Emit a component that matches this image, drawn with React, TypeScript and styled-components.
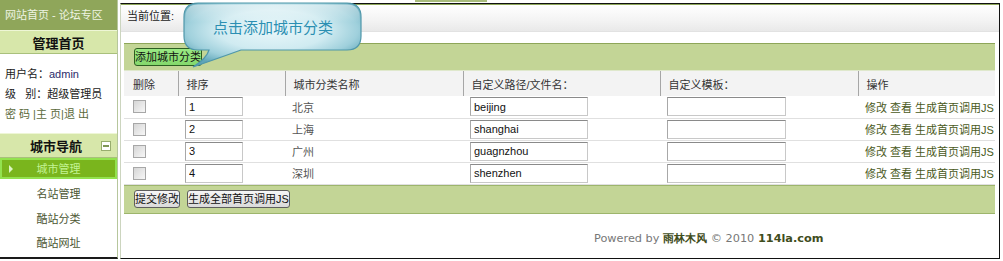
import React from 'react';
import styled, { createGlobalStyle } from 'styled-components';

// Global reset
const GlobalStyle = createGlobalStyle`
  *, *::before, *::after { box-sizing: border-box; }
  html, body { margin: 0; padding: 0; background: #fff; }
  body {
    font: 11px "Liberation Sans", "Noto Sans CJK SC", sans-serif;
    color: #222;
  }
`;

const Page = styled.div`
  display: flex;
  width: 1003px;
  height: 261px;
  overflow: hidden;
`;

// Sidebar
const Sidebar = styled.aside`
  width: 118px;
  height: 259px;
  border-right: 1px solid #b6c69c;
  border-bottom: 2px solid #1a1a1a;
  display: flex;
  flex-direction: column;
`;

const SideTitle = styled.div`
  height: 30px;
  line-height: 30px;
  padding-left: 5px;
  background: #8fa65a;
  color: #eef4e2;
  white-space: nowrap;
`;

const SideHead = styled.div<{ $withToggle?: boolean }>`
  display: flex;
  align-items: center;
  justify-content: ${p => (p.$withToggle ? 'flex-start' : 'center')};
  height: ${p => (p.$withToggle ? '25px' : '24px')};
  padding-left: ${p => (p.$withToggle ? '30px' : '0')};
  background: #d7e7aa;
  border-top: 1px solid #eef6d6;
  border-bottom: 1px solid #a9c07c;
  font-size: 13px;
  font-weight: bold;
  color: #111;
`;

const Toggle = styled.span`
  position: relative;
  width: 10px;
  height: 10px;
  margin-left: auto;
  margin-right: 6px;
  background: #fff;
  border: 1px solid #98ad6e;

  &::after {
    content: '';
    position: absolute;
    left: 1px;
    right: 1px;
    top: 3px;
    height: 2px;
    background: #7f9656;
  }
`;

const UserInfo = styled.div`
  padding: 10px 0 0 5px;
  line-height: 20px;
  height: 79px;
  white-space: nowrap;
`;

const UserName = styled.span`
  color: #2c2c6a;
`;

const UserLinks = styled.div`
  color: #5b6a3c;
`;

const ActiveItem = styled.div`
  position: relative;
  height: 21px;
  padding-top: 1px;
  line-height: 16px;
  text-align: center;
  background: #7ab51d;
  border: 2px solid #93e24f;
  color: #c3f394;

  &::before {
    content: '';
    position: absolute;
    left: 7px;
    top: 5px;
    border-style: solid;
    border-width: 4px 0 4px 4px;
    border-color: transparent transparent transparent #dcf6c2;
  }
`;

const NavList = styled.div`
  padding-top: 3px;
`;

const NavItem = styled.div`
  height: 24.5px;
  line-height: 24px;
  text-align: center;
  color: #4b5632;
`;

// Main area
const Main = styled.main`
  flex: 1;
  margin-left: 2px;
  margin-right: 3px;
  display: flex;
  flex-direction: column;
`;

const TopStrip = styled.div`
  height: 3px;
  display: flex;
`;

const TopTab = styled.span`
  width: 72px;
  height: 2px;
  margin-left: 295px;
  background: #a9bd7c;
`;

const Frame = styled.div`
  position: relative;
  height: 256px;
  border: 1px solid #111;
  border-left-color: #ccd5bf;
  display: flex;
  flex-direction: column;
`;

const Breadcrumb = styled.div`
  height: 28px;
  padding: 0 6px;
  line-height: 22px;
  border-top: 1px solid #8ea659;
  border-bottom: 1px solid #e2e2e2;
  background: linear-gradient(#ffffff, #f3f3f3 60%, #e9e9e9);
  color: #222;
`;

const Panel = styled.section`
  margin: 11px 4px 0 3px;
`;

const Band = styled.div<{ $edge: string; $bottom?: string; $h?: number }>`
  display: flex;
  align-items: center;
  gap: 7px;
  height: ${p => p.$h ?? 29}px;
  padding-left: 10px;
  background: #c3d596;
  border-top: 1px solid ${p => p.$edge};
  border-bottom: 1px solid ${p => p.$bottom ?? p.$edge};
`;

const Button = styled.button<{ $green?: boolean }>`
  height: 18px;
  padding: 0;
  font: inherit;
  color: #111;
  line-height: 16px;
  border: 1px solid ${p => (p.$green ? '#2d5e22' : '#5e5e5e')};
  border-radius: 3px;
  background: ${p =>
    p.$green
      ? 'linear-gradient(#9ae884, #84d86c)'
      : 'linear-gradient(#f6f6f6, #dadada)'};
`;

const Table = styled.table`
  width: 100%;
  border-collapse: collapse;
  table-layout: fixed;
`;

const Th = styled.th<{ $w?: number }>`
  width: ${p => (p.$w ? `${p.$w}px` : 'auto')};
  height: 25px;
  padding: 0 0 0 8px;
  text-align: left;
  font-weight: normal;
  color: #333;
  background: #f3f3f3;
  border-left: 1px solid #a6a6a6;

  &:first-child {
    border-left: none;
    padding-left: 9px;
  }
`;

const Td = styled.td<{ $tone?: 'muted' | 'link' }>`
  height: 22px;
  padding: 0 0 0 7px;
  border-bottom: 1px solid #e0e0e0;
  white-space: nowrap;
  color: ${p => (p.$tone === 'muted' ? '#555' : p.$tone === 'link' ? '#4a5a22' : '#222')};

  &:first-child {
    padding-left: 9px;
  }
`;

const Check = styled.input.attrs({ type: 'checkbox' })`
  appearance: none;
  display: block;
  width: 13px;
  height: 13px;
  margin: 0;
  border: 1px solid #a7a7a7;
  background: linear-gradient(135deg, #d6d6d6, #f7f7f7);
`;

const Field = styled.input<{ $w: number }>`
  display: block;
  width: ${p => p.$w}px;
  height: 19px;
  padding: 0 3px;
  font: 11px "Liberation Sans", sans-serif;
  color: #111;
  border: 1px solid #c8c8c8;
  border-top-color: #8a8a8a;
  border-left-color: #a8a8a8;
  background: #fff;
  outline: none;
`;

const Powered = styled.div`
  padding: 17px 0 0 473px;
  line-height: 14px;
  font: 11.3px "DejaVu Sans", Verdana, sans-serif;
  color: #777;
  white-space: nowrap;

  b {
    color: #3f4d1c;
  }
`;

// Callout bubble over the toolbar
const Callout = styled.div`
  position: absolute;
  left: 60px;
  top: -4px;
  width: 184px;
  height: 70px;
`;

const CalloutText = styled.span`
  position: absolute;
  left: 2px;
  top: 3px;
  width: 180px;
  height: 47px;
  display: flex;
  align-items: center;
  justify-content: center;
  font: 15px "Noto Sans CJK SC", sans-serif;
  color: #2b8fb2;
`;

const cities = [
  { sort: '1', name: '北京', path: 'beijing' },
  { sort: '2', name: '上海', path: 'shanghai' },
  { sort: '3', name: '广州', path: 'guagnzhou' },
  { sort: '4', name: '深圳', path: 'shenzhen' },
];

const Bubble: React.FC = () => (
  <Callout>
    <svg width="184" height="70" viewBox="0 0 184 70">
      <defs>
        <radialGradient id="bubbleFill" cx="50%" cy="42%" r="62%">
          <stop offset="0%" stopColor="#e9f7fa" />
          <stop offset="50%" stopColor="#d0ebf1" />
          <stop offset="78%" stopColor="#9fd0dc" />
          <stop offset="100%" stopColor="#5ea5b8" />
        </radialGradient>
        <linearGradient id="bubbleGloss" x1="0" y1="0" x2="0" y2="1">
          <stop offset="0%" stopColor="#ffffff" stopOpacity="0.55" />
          <stop offset="40%" stopColor="#ffffff" stopOpacity="0" />
        </linearGradient>
      </defs>
      <path
        d="M17 3 H166 Q180 3 180 17 V36 Q180 50 166 50 H60 Q38 58 12 67 Q26 58 28 50 H17 Q3 50 3 36 V17 Q3 3 17 3 Z"
        fill="url(#bubbleFill)"
        stroke="#4f97aa"
        strokeWidth="1.2"
      />
      <path
        d="M17 4.5 H166 Q178.5 4.5 178.5 17 V36 Q178.5 48.5 166 48.5 H17 Q4.5 48.5 4.5 36 V17 Q4.5 4.5 17 4.5 Z"
        fill="url(#bubbleGloss)"
      />
    </svg>
    <CalloutText>点击添加城市分类</CalloutText>
  </Callout>
);

const App: React.FC = () => {
  return (
    <>
      <GlobalStyle />
      <Page>
        <Sidebar>
          <SideTitle>网站首页 - 论坛专区</SideTitle>
          <SideHead>管理首页</SideHead>
          <UserInfo>
            <div>用户名：<UserName>admin</UserName></div>
            <div>级&nbsp;&nbsp;&nbsp;别：超级管理员</div>
            <UserLinks>密 码 |主 页|退 出</UserLinks>
          </UserInfo>
          <SideHead $withToggle>
            城市导航
            <Toggle />
          </SideHead>
          <ActiveItem>城市管理</ActiveItem>
          <NavList>
            <NavItem>名站管理</NavItem>
            <NavItem>酷站分类</NavItem>
            <NavItem>酷站网址</NavItem>
          </NavList>
        </Sidebar>

        <Main>
          <TopStrip>
            <TopTab />
          </TopStrip>
          <Frame>
            <Breadcrumb>当前位置:</Breadcrumb>
            <Panel>
              <Band $edge="#8ea659" $bottom="#dfe8cc" $h={28}>
                <Button $green>添加城市分类</Button>
              </Band>
              <Table>
                <thead>
                  <tr>
                    <Th $w={54}>删除</Th>
                    <Th $w={107}>排序</Th>
                    <Th $w={178}>城市分类名称</Th>
                    <Th $w={197}>自定义路径/文件名：</Th>
                    <Th $w={198}>自定义模板：</Th>
                    <Th>操作</Th>
                  </tr>
                </thead>
                <tbody>
                  {cities.map(c => (
                    <tr key={c.sort}>
                      <Td><Check /></Td>
                      <Td><Field $w={58} defaultValue={c.sort} /></Td>
                      <Td $tone="muted">{c.name}</Td>
                      <Td><Field $w={118} defaultValue={c.path} /></Td>
                      <Td><Field $w={119} defaultValue="" /></Td>
                      <Td $tone="link">修改 查看 生成首页调用JS</Td>
                    </tr>
                  ))}
                </tbody>
              </Table>
              <Band $edge="#9db56c">
                <Button>提交修改</Button>
                <Button>生成全部首页调用JS</Button>
              </Band>
            </Panel>
            <Powered>
              Powered by <b>雨林木风</b> © 2010 <b>114la.com</b>
            </Powered>
            <Bubble />
          </Frame>
        </Main>
      </Page>
    </>
  );
};

export default App;
